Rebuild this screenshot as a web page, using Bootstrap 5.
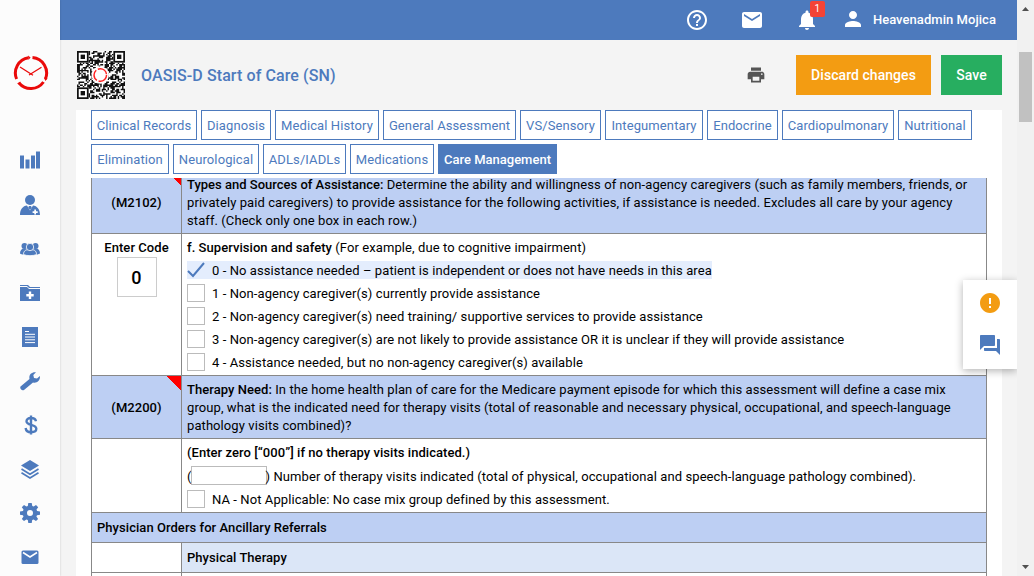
<!DOCTYPE html>
<html lang="en">
<head>
<meta charset="utf-8">
<title>OASIS-D Start of Care (SN)</title>
<link href="https://cdn.jsdelivr.net/npm/bootstrap@5.3.0/dist/css/bootstrap.min.css" rel="stylesheet">
<style>
:root{--blue:#4d7abd;--line:#888}
body{font-family:Roboto,"Liberation Sans",sans-serif;font-size:13px;line-height:18px;color:#000;background:#f4f4f4;height:576px;overflow:hidden}
b{font-weight:500}
.side{width:60px;background:#fcfcfc;box-shadow:0 0 2px rgba(0,0,0,.18);z-index:2}
.side svg{display:block;fill:var(--blue);width:20px;height:20px}
.side .brandmark{width:36px;height:36px;margin:55px 0 60px 2px;fill:none}
.side nav{gap:24.05px}
.topbar{height:40px;background:var(--blue);color:#fff}
.topbar svg,.tools svg,.floater svg{display:block;fill:currentColor}
.mail{margin-left:31px}
.bell{margin-left:31px}
.person{margin:-2px 0 0 22px}
.user{font-weight:500;letter-spacing:.05px;margin:0 21px 0 8px}
.alert-count{left:15px;top:-7px;width:15px;height:16px;background:#f44336;border-radius:2px;font-size:10px;line-height:16px}
.tools{height:70px;padding:0 15px 0 17px}
.page-title{font-size:16px;font-weight:500;color:var(--blue);line-height:20px;letter-spacing:.09px;margin:2px 0 0 16px}
.printer{margin-right:30px}
.act{height:40px;border:0;border-radius:0;color:#fff;font-size:14px;font-weight:500;padding:0;letter-spacing:.05px}
.act:hover{color:#fff}
.discard{width:135px;background:#f39c12;margin-right:10px}
.save{width:61px;background:#27ae60}
.sheet{margin:0 15px 0 16px;padding-left:15px}
.tabs{gap:4px;height:68px}
.tabs a{height:30px;border:1px solid var(--blue);color:var(--blue);line-height:29px;text-decoration:none;text-align:center;white-space:nowrap;letter-spacing:.1px}
.tabs .current{background:var(--blue);color:#fff;font-weight:500;letter-spacing:0;width:119px}
.tabs a:nth-child(1){width:106px}.tabs a:nth-child(2){width:70px}.tabs a:nth-child(3){width:104px}.tabs a:nth-child(4){width:133px}.tabs a:nth-child(5){width:81px}.tabs a:nth-child(6){width:98px}.tabs a:nth-child(7){width:71px}.tabs a:nth-child(8){width:112px}.tabs a:nth-child(9){width:74px}.tabs a:nth-child(10){width:78px}.tabs a:nth-child(11){width:86px}.tabs a:nth-child(12){width:83px}.tabs a:nth-child(13){width:84px}
.form-view{width:896px;letter-spacing:.085px}
.form-view b{letter-spacing:.05px}
.form-view .lead-in{letter-spacing:0}
.form-grid{margin-top:-8px;border:1px solid var(--line);border-bottom:0}
.line-row{display:flex;border-bottom:1px solid var(--line)}
.code{width:90px;border-right:1px solid var(--line);text-align:center;flex:none}
.code b{display:block}
.body-cell{flex:1;padding:4px 5px 0;white-space:nowrap}
.shade{background:#bdcff3}
.shade .body-cell{padding-top:5px}
.shade .heading-cell{padding-top:6px}
.flagged{padding-top:2px;background:linear-gradient(to bottom left,#f00 50%,transparent 50.5%) top right/14px 14px no-repeat}
.sub{background:#dbe6f7}
.form-view .sub{padding-top:6px}
.h-q{height:63px}.h-a{height:142px}.h-b{height:74px}.h-s{height:30px}
.code-box{width:40px;height:40px;border:1px solid #ccc;margin:0 auto;font-size:18px;font-weight:500;line-height:40px}
.opt{display:flex;width:max-content;height:18px;line-height:20px;margin-bottom:5px}
.opt i{width:18px;height:18px;border:1px solid #bbb;margin-right:7px}
.opt.on{background:#e4edfd}
.opt.on svg{width:18px;height:18px;margin-right:7px}
.num{width:76px;height:19px;border:1px solid #bbb;padding:0;display:block;margin:-1px -1px 0}
.visits{margin-top:6px}
.floater{right:17px;top:280px;width:54px;height:89px;padding-top:11px;gap:18px;box-shadow:0 2px 8px rgba(0,0,0,.3);clip-path:inset(-12px 0 -12px -12px)}
.bar{width:17px;background:#f1f1f1}
.bar .thumb{width:13px;height:70px;background:#c1c1c1}
.bar svg{display:block;fill:#505050}
</style>
<script src="https://cdn.jsdelivr.net/npm/bootstrap@5.3.0/dist/js/bootstrap.bundle.min.js"></script>
</head>
<body class="d-flex position-relative">
<aside class="side d-flex flex-column align-items-center flex-shrink-0">
<svg class="brandmark flex-shrink-0" viewBox="0 0 36 36"><g stroke="#ea0a0a" stroke-width="3"><path d="M19.500 2.600A15.500 15.500 0 0 1 32.400 24"/><path d="M30.500 27A15.500 15.500 0 0 1 6 28"/><path d="M3.600 24A15.500 15.500 0 0 1 15.500 2.700"/></g><path d="M7 12l13 8.300M28.500 12.300L16 20" stroke="#ea0a0a" stroke-width="1.300"/><path d="M15 .6l2.600 2-2 2.200zM31 22.500l3.600 1-2.300 2.500zM4 28.500l3.300-2 .5 3.500z" fill="#ea0a0a"/></svg>
<nav class="d-flex flex-column align-items-center">
<svg viewBox="0 0 20 20"><path d="M0 4.500h4v13H0zM5.500 8.500h4v9h-4zM11 4.500h4v13h-4zM16 .5h4v17h-4z"/></svg>
<svg viewBox="0 0 20 20"><circle cx="10" cy="5" r="5"/><path d="M0 20c0-6 3-9 7-9.500l3 5 3-5c4 .5 7 3.500 7 9.500z"/><path d="M9 11h2l.8 1.500L10 15l-1.800-2.500z"/><path d="M14.300 14.500h1.700v1.700h1.700v1.700H16v1.700h-1.700v-1.700h-1.700v-1.700h1.700z" fill="#fff"/></svg>
<svg viewBox="0 0 20 20"><circle cx="4.500" cy="7" r="3"/><circle cx="15.500" cy="7" r="3"/><path d="M0 14.500c0-3 1.500-5 4-5h12c2.500 0 4 2 4 5-2 1-3 1-4 1H4c-2 0-3-.3-4-1z"/><g stroke="#fcfcfc" stroke-width=".8"><path d="M3.500 15.500c0-4 2.500-5 6.500-5s6.500 1 6.500 5c-3 1.500-10 1.500-13 0z"/><circle cx="10" cy="8" r="3.700"/></g></svg>
<svg viewBox="0 0 20 20"><path d="M0 2h8l2 2h10v1H9L7 3H0zM0 4h7l2 2h11v12H0z"/><path d="M8.800 8.500h2.400V11h2.500v2.400h-2.500V16H8.800v-2.600H6.300V11h2.500z" fill="#fff"/></svg>
<svg viewBox="0 0 20 20"><path d="M2 0h16v20H2z"/><path d="M5 4.500h4M5 7.300h10M5 10h10M5 12.800h10M5 15.600h10" stroke="#fff" stroke-width="1"/></svg>
<svg viewBox="0 0 20 20"><path d="M.5 15.500l9-7.500C8.700 4 11 .8 16 1.200L13.300 4l.7 3 3 .5L19.900 5c.6 4.500-2.900 7.500-6.900 6.500L4 19c-2.500 1-4.500-1.500-3.500-3.500z"/></svg>
<svg viewBox="0 0 20 20"><path d="M16 6.200C15.500 4 14 3 11 3c-3 0-4.500 1.200-4.500 3.200 0 4.800 9.800 2.500 9.800 7.600 0 2.200-2 3.400-5.200 3.400-3.500 0-5.100-1.400-5.500-4.200M11 .5v19" fill="none" stroke="#4d7abd" stroke-width="2.400"/></svg>
<svg viewBox="0 0 20 20"><path d="M10 1l9 5.500-9 5.500L1 6.500z"/><path d="M1.500 10L10 15.200l8.500-5.200M1.500 13.800l8.500 5.200 8.500-5.200" fill="none" stroke="#4d7abd" stroke-width="1.700"/></svg>
<svg viewBox="0 0 20 20"><path fill-rule="evenodd" d="M8.300 0h3.400l.6 3 1.400.6L16 2l2.200 2.200-1.700 2.400.6 1.400 2.900.5v3.200l-3 .5-.6 1.400 1.700 2.400L16 18l-2.400-1.600-1.400.6-.5 3H8.300l-.5-3-1.400-.6L4 18l-2.200-2 1.700-2.400-.6-1.400-2.900-.5V8.500L3 8l.5-1.400-1.700-2.400L4 2l2.400 1.600L7.800 3zM10 7a3 3 0 1 0 0 6 3 3 0 0 0 0-6z"/></svg>
<svg viewBox="0 0 20 20"><rect x="1.500" y="3.500" width="17" height="13.500" rx="1.500"/><path d="M3 5.500l7 4.500 7-4.500" fill="none" stroke="#fff" stroke-width="1.500"/></svg>
</nav>
</aside>
<div class="flex-grow-1 d-flex flex-column overflow-hidden">
<header class="topbar d-flex align-items-center flex-shrink-0">
<svg class="ms-auto" width="24" height="24" viewBox="0 0 24 24"><path d="M11 18h2v-2h-2v2zm1-16C6.480 2 2 6.480 2 12s4.480 10 10 10 10-4.480 10-10S17.520 2 12 2zm0 18c-4.410 0-8-3.590-8-8s3.590-8 8-8 8 3.590 8 8-3.590 8-8 8zm0-14c-2.210 0-4 1.790-4 4h2c0-1.100.9-2 2-2s2 .9 2 2c0 2-3 1.750-3 5h2c0-2.250 3-2.500 3-5 0-2.210-1.790-4-4-4z"/></svg>
<svg class="mail" width="24" height="24" viewBox="0 0 24 24"><path d="M20 4H4c-1.100 0-1.990.9-1.990 2L2 18c0 1.100.9 2 2 2h16c1.100 0 2-.9 2-2V6c0-1.100-.9-2-2-2zm0 4l-8 5-8-5V6l8 5 8-5v2z"/></svg>
<div class="bell position-relative"><svg width="24" height="24" viewBox="0 0 24 24"><path d="M12 22c1.100 0 2-.9 2-2h-4c0 1.100.89 2 2 2zm6-6v-5c0-3.070-1.640-5.640-4.500-6.320V4c0-.83-.67-1.500-1.500-1.500s-1.500.67-1.500 1.500v.68C7.630 5.360 6 7.920 6 11v5l-2 2v1h16v-1l-2-2z"/></svg><span class="alert-count position-absolute text-center">1</span></div>
<svg class="person" width="24" height="24" viewBox="0 0 24 24"><path d="M12 12c2.210 0 4-1.790 4-4s-1.790-4-4-4-4 1.790-4 4 1.790 4 4 4zm0 2c-2.670 0-8 1.340-8 4v2h16v-2c0-2.660-5.330-4-8-4z"/></svg>
<span class="user">Heavenadmin Mojica</span>
</header>
<div class="tools d-flex align-items-center flex-shrink-0">
<svg id="qr" width="48" height="48" viewBox="0 0 33 33"></svg>
<span class="page-title">OASIS-D Start of Care (SN)</span>
<svg class="ms-auto printer" width="20" height="20" viewBox="0 0 24 24" color="#555"><path d="M19 8H5c-1.660 0-3 1.340-3 3v6h4v4h12v-4h4v-6c0-1.660-1.340-3-3-3zm-3 11H8v-5h8v5zm3-7c-.55 0-1-.45-1-1s.45-1 1-1 1 .45 1 1-.45 1-1 1zm-1-9H6v4h12V3z"/></svg>
<button class="btn act discard">Discard changes</button>
<button class="btn act save">Save</button>
</div>
<main class="sheet bg-white flex-grow-1 overflow-hidden">
<div class="tabs d-flex flex-wrap align-content-start">
<a href="#">Clinical Records</a><a href="#">Diagnosis</a><a href="#">Medical History</a><a href="#">General Assessment</a><a href="#">VS/Sensory</a><a href="#">Integumentary</a><a href="#">Endocrine</a><a href="#">Cardiopulmonary</a><a href="#">Nutritional</a><a href="#">Elimination</a><a href="#">Neurological</a><a href="#">ADLs/IADLs</a><a href="#">Medications</a><a href="#" class="current">Care Management</a>
</div>
<div class="form-view overflow-hidden">
<div class="form-grid">
<div class="line-row h-q shade"><div class="code flagged d-flex align-items-center justify-content-center"><b>(M2102)</b></div><div class="body-cell"><b class="lead-in">Types and Sources of Assistance:</b> Determine the ability and willingness of non-agency caregivers (such as family members, friends, or<br>privately paid caregivers) to provide assistance for the following activities, if assistance is needed. Excludes all care by your agency<br>staff. (Check only one box in each row.)</div></div>
<div class="line-row h-a"><div class="code" style="padding-top:5px"><b>Enter Code</b><div class="code-box">0</div></div><div class="body-cell"><div class="opt"><span><b>f. Supervision and safety</b> (For example, due to cognitive impairment)</span></div>
<div class="opt on"><svg viewBox="0 0 18 18"><path d="M1 10l5 5L17 2" fill="none" stroke="#4d7abd" stroke-width="2"/></svg><span>0 - No assistance needed – patient is independent or does not have needs in this area</span></div>
<div class="opt"><i></i><span>1 - Non-agency caregiver(s) currently provide assistance</span></div>
<div class="opt"><i></i><span>2 - Non-agency caregiver(s) need training/ supportive services to provide assistance</span></div>
<div class="opt"><i></i><span>3 - Non-agency caregiver(s) are not likely to provide assistance OR it is unclear if they will provide assistance</span></div>
<div class="opt"><i></i><span>4 - Assistance needed, but no non-agency caregiver(s) available</span></div></div></div>
<div class="line-row h-q shade"><div class="code flagged d-flex align-items-center justify-content-center"><b>(M2200)</b></div><div class="body-cell"><b>Therapy Need:</b> In the home health plan of care for the Medicare payment episode for which this assessment will define a case mix<br>group, what is the indicated need for therapy visits (total of reasonable and necessary physical, occupational, and speech-language<br>pathology visits combined)?</div></div>
<div class="line-row h-b"><div class="code"></div><div class="body-cell"><div class="opt"><b>(Enter zero [“000”] if no therapy visits indicated.)</b></div><div class="opt visits"><span>(</span><input class="num" aria-label="Number of therapy visits"><span>) Number of therapy visits indicated (total of physical, occupational and speech-language pathology combined).</span></div><div class="opt"><i></i><span>NA - Not Applicable: No case mix group defined by this assessment.</span></div></div></div>
<div class="line-row h-s shade"><div class="body-cell heading-cell"><b>Physician Orders for Ancillary Referrals</b></div></div>
<div class="line-row h-s"><div class="code"></div><div class="body-cell sub"><b>Physical Therapy</b></div></div>
<div class="line-row h-s"><div class="code"></div></div>
</div></div>
</main>
</div>
<div class="bar d-flex flex-column align-items-center flex-shrink-0"><svg width="17" height="52" viewBox="0 0 17 52"><path d="M5 11l3.500-4 3.500 4z"/></svg><div class="thumb"></div><svg class="mt-auto" width="17" height="17" viewBox="0 0 17 17"><path d="M5 6l3.500 4L12 6z"/></svg></div>
<div class="floater position-absolute bg-white d-flex flex-column align-items-center">
<svg width="24" height="24" viewBox="0 0 24 24" color="#f39c12"><path d="M12 2C6.480 2 2 6.480 2 12s4.480 10 10 10 10-4.480 10-10S17.520 2 12 2zm1 15h-2v-2h2v2zm0-4h-2V7h2v6z"/></svg>
<svg width="24" height="24" viewBox="0 0 24 24" color="#4d7abd"><path d="M21 6h-2v9H6v2c0 .55.45 1 1 1h11l4 4V7c0-.55-.45-1-1-1zm-4 6V3c0-.55-.45-1-1-1H3c-.55 0-1 .45-1 1v14l4-4h10c.55 0 1-.45 1-1z"/></svg>
</div>
<script>
// Draws the record's QR badge: module pattern, three finder squares and the clock ring
(function(){
  var n=33,s=7,d='',x,y;
  function zone(a,b){return (a<8&&b<8)||(a>24&&b<8)||(a<8&&b>24)}
  for(y=0;y<n;y++)for(x=0;x<n;x++){
    s=(s*1103515245+12345)%2147483648;
    if(!zone(x,y)&&(s>>16)%100<56)d+='M'+x+' '+y+'h1v1h-1z';
  }
  var f='';[[0,0],[25,0],[0,25]].forEach(function(p){
    f+='<rect x="'+(p[0]+.6)+'" y="'+(p[1]+.6)+'" width="6.800" height="6.800" fill="none" stroke="#111" stroke-width="1.200"/><rect x="'+(p[0]+2.5)+'" y="'+(p[1]+2.5)+'" width="3" height="3"/>';
  });
  document.getElementById('qr').innerHTML='<rect width="33" height="33" fill="#fff"/><g fill="#111"><path d="'+d+'"/>'+f+'</g><circle cx="16" cy="16.500" r="6" fill="#fff"/><circle cx="16" cy="16.500" r="4.300" fill="none" stroke="#f22" stroke-width="1" stroke-dasharray="7.800 1.200"/>';
})();
</script>
</body>
</html>
